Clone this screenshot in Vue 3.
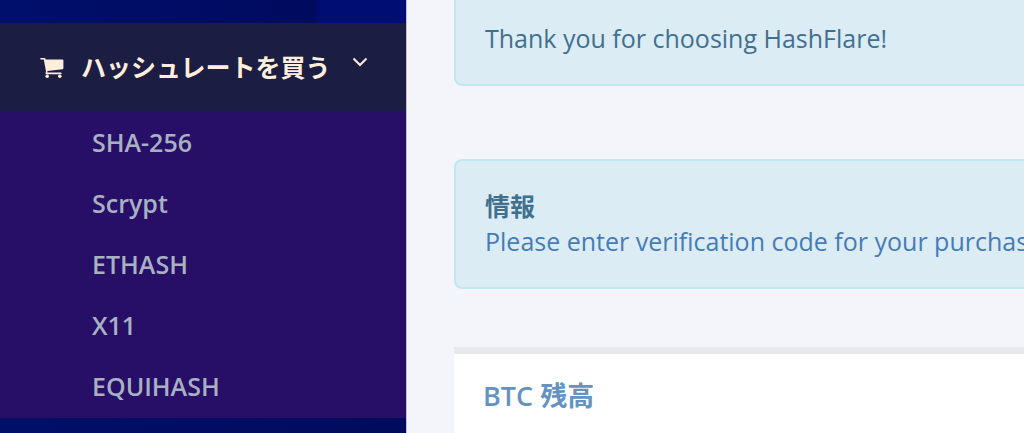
<script setup>
const algorithms = ['SHA-256', 'Scrypt', 'ETHASH', 'X11', 'EQUIHASH']
</script>

<template>
  <div class="layout">
    <aside class="sidebar">
      <nav class="menu" aria-label="Main">
        <button class="menu-toggle" type="button" aria-expanded="true" aria-controls="algorithms">
          <svg class="cart" viewBox="0 0 24 22" aria-hidden="true">
            <path d="M1 1H4.4Q5.2 1 5.4 1.8L5.6 2.5H22.4Q23.4 2.5 23.4 3.5V11.2Q23.4 12.1 22.5 12.3L7.4 14.1L7.4 15.6H20.8Q21.6 15.6 21.6 16.4Q21.6 17.2 20.8 17.2H6.4Q5.5 17.2 5.5 16.3L6 14.4L3.8 2.6H1Q0.2 2.6 0.2 1.8Q0.2 1 1 1Z" />
            <circle cx="7.2" cy="19.3" r="1.8" />
            <circle cx="19.8" cy="19.3" r="1.8" />
          </svg>
          <span class="menu-label">ハッシュレートを買う</span>
          <svg class="chevron" viewBox="0 0 16 10" aria-hidden="true">
            <path d="M1.5 1.5L8 8L14.5 1.5" />
          </svg>
        </button>
        <ul id="algorithms" class="submenu">
          <li v-for="name in algorithms" :key="name">
            <a href="#">{{ name }}</a>
          </li>
        </ul>
      </nav>
    </aside>
    <main class="content">
      <section class="alert alert-top">
        <p>Thank you for choosing HashFlare!</p>
      </section>
      <section class="alert">
        <strong>情報</strong>
        <a href="#">Please enter verification code for your purchase</a>
      </section>
      <section class="card">
        <h2>BTC 残高</h2>
      </section>
    </main>
  </div>
</template>

<style>
body {
  background: #f4f5fa;
}
</style>

<style scoped>
.layout {
  display: flex;
  height: 100vh;
  overflow: hidden;
  font-family: "Open Sans", "Noto Sans CJK JP", sans-serif;
  font-size: 25px;
  line-height: 35px;
}

.sidebar {
  display: flex;
  flex: 0 0 406px;
  flex-direction: column;
  border-right: 1px solid #c3bfd4;
  box-sizing: content-box;
  background: linear-gradient(90deg, #000f68 0%, #000b5c 100%);
}

.sidebar::before {
  flex: 0 0 23px;
  background: linear-gradient(90deg, #000f6c 0%, #000b60 70%, #000b5c 77%, #000e74 79%, #000e74 100%);
  content: "";
}

.menu-toggle {
  display: flex;
  align-items: center;
  width: 100%;
  height: 88px;
  padding: 0 38px 0 40px;
  border: 0;
  background: #1c1d43;
  color: #ffeedb;
  font: inherit;
  font-weight: 700;
}

.cart {
  width: 24px;
  height: 22px;
  margin: 2px 17px 0 0;
  fill: currentColor;
}

.chevron {
  width: 16px;
  height: 10px;
  margin: 0 0 10px auto;
  fill: none;
  stroke: currentColor;
  stroke-width: 2;
}

.submenu {
  margin: 0;
  padding: 1px 0;
  background: #270e66;
  list-style: none;
}

.submenu a {
  display: block;
  padding-left: 92px;
  color: #a7b1c2;
  font-weight: 600;
  line-height: 61px;
  text-decoration: none;
}

.content {
  display: flex;
  flex: 1;
  flex-direction: column;
  min-width: 0;
  padding-left: 47px;
}

.alert {
  margin-bottom: 58px;
  padding: 28px 0 28px 29px;
  border: 2px solid #c1e7f0;
  border-right: 0;
  border-radius: 8px 0 0 8px;
  background: #dcecf5;
  color: #41708f;
  white-space: nowrap;
}

.alert-top {
  margin-bottom: 73px;
  padding-top: 21px;
  border-top: 0;
  border-radius: 0 0 0 8px;
}

.alert p {
  margin: 0;
}

.alert strong,
.alert a {
  display: block;
}

.alert a {
  color: #457cb5;
  text-decoration: none;
}

.card {
  flex: 1;
  padding: 24px 29px;
  border-top: 7px solid #e7e8ea;
  background: #fff;
}

.card h2 {
  margin: 0;
  color: #6493c1;
  font-size: 27px;
  font-weight: 600;
}
</style>
